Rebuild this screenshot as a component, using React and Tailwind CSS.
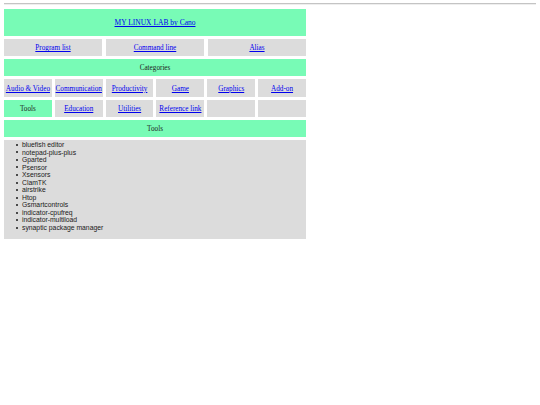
const mint = 'bg-[#78fbb6]'
const grey = 'bg-[#dcdcdc]'
const link = 'text-[#0000ee] underline'

const menu = ['Program list', 'Command line', 'Alias']

const categories = [
  ['Audio & Video', 'Communication', 'Productivity', 'Game', 'Graphics', 'Add-on'],
  ['Tools', 'Education', 'Utilities', 'Reference link', '', ''],
]

const tools = [
  'bluefish editor',
  'notepad-plus-plus',
  'Gparted',
  'Psensor',
  'Xsensors',
  'ClamTK',
  'airstrike',
  'Htop',
  'Gsmartcontrols',
  'indicator-cpufreq',
  'indicator-multiload',
  'synaptic package manager',
]

const Cell = ({ label, active }) => (
  <div
    className={`flex items-center justify-center pt-[2px] ${active ? mint : grey}`}
  >
    {label && (
      <a href="#" className={active ? 'text-[#222]' : link}>
        {label}
      </a>
    )}
  </div>
)

export default function App() {
  return (
    <div className="w-[540px] h-[405px] bg-white font-['Liberation_Serif',serif] text-[7.2px] leading-normal">
      <div className="pt-[3px] px-[4px]">
        <div className="h-[1px] bg-[#c4c4c4]" />
        <div className="h-[1px] bg-[#eeeeee]" />
      </div>

      <div className="ml-[4px] mt-[4px] w-[302px] flex flex-col gap-[3px]">
        <div className={`h-[27px] flex items-center justify-center pt-[1px] ${mint}`}>
          <a href="#" className={`${link} text-[7.5px]`}>MY LINUX LAB by Cano</a>
        </div>

        <div className="h-[17px] grid grid-cols-3 gap-x-[4px]">
          {menu.map((m) => (
            <Cell key={m} label={m} />
          ))}
        </div>

        <div className={`h-[17px] flex items-center justify-center pt-[2px] text-[#222] ${mint}`}>
          Categories
        </div>

        <div className="h-[18px] grid grid-cols-6 gap-x-[3px]">
          {categories[0].map((c, i) => (
            <Cell key={i} label={c} />
          ))}
        </div>

        <div className="h-[17px] grid grid-cols-6 gap-x-[3px]">
          {categories[1].map((c, i) => (
            <Cell key={i} label={c} active={c === 'Tools'} />
          ))}
        </div>

        <div className={`h-[17px] flex items-center justify-center pt-[2px] text-[#222] ${mint}`}>
          Tools
        </div>

        <div className={`h-[99px] pt-[1px] ${grey}`}>
          <ul className="pl-[12px] font-['Liberation_Sans',Arial,sans-serif] text-[6.8px] leading-[7.55px] text-[#1a1a1a]">
            {tools.map((t) => (
              <li key={t} className="flex items-center">
                <span className="w-[2px] h-[2px] rounded-full bg-[#1a1a1a] mr-[4px]" />
                {t}
              </li>
            ))}
          </ul>
        </div>
      </div>
    </div>
  )
}
